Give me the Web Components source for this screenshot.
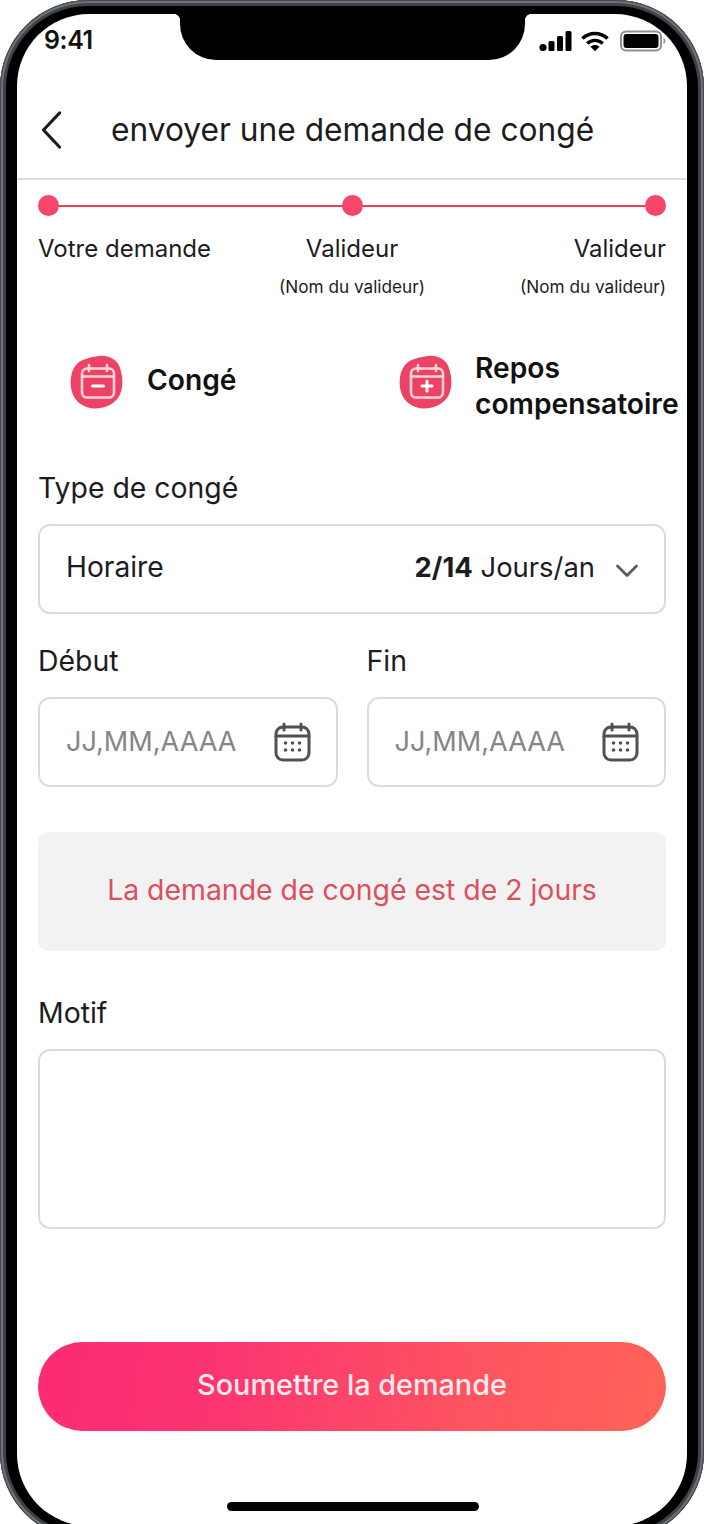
<!DOCTYPE html>
<html lang="fr">
<head>
<meta charset="utf-8">
<title>Demande de congé</title>
<style>
  html, body { margin: 0; height: 1524px; overflow: hidden; background: #fff; }
  body { font-family: Inter, "Open Sans", sans-serif; color: #1c1c1e; }
</style>
</head>
<body>
<phone-frame>
  <status-bar></status-bar>
  <app-header>envoyer une demande de congé</app-header>
  <step-tracker></step-tracker>
  <leave-options></leave-options>
  <form-field style="margin-top:52px">Type de congé
    <select-box slot="control" value="Horaire"><b>2/14</b> Jours/an</select-box>
  </form-field>
  <date-row></date-row>
  <notice-box>La demande de congé est de 2 jours</notice-box>
  <form-field style="margin-top:44px">Motif
    <text-box slot="control"></text-box>
  </form-field>
  <submit-button>Soumettre la demande</submit-button>
  <home-bar></home-bar>
</phone-frame>

<script>
  // small helper, every component is the same shape: a shadow root and some markup
  function component(name, html, setup) {
    customElements.define(name, class extends HTMLElement {
      constructor() {
        super();
        this.attachShadow({ mode: 'open' });
      }
      connectedCallback() {
        this.shadowRoot.innerHTML = html;
        if (setup) setup(this);
      }
    });
  }

  component('phone-frame', `
    <style>
      :host { display: block; width: 704px; height: 1540px; box-sizing: border-box;
        padding: 14px 17px; border-radius: 88px; background: #000;
        box-shadow: inset 0 0 0 1px #45484d, inset 0 0 0 3px #6f7379, inset 0 0 0 6px #3f4247; }
      .screen { height: 1512px; background: #fff; border-radius: 72px; overflow: hidden;
        display: flex; flex-direction: column; }
    </style>
    <div class="screen"><slot></slot></div>`);

  component('status-bar', `
    <style>
      :host { display: flex; height: 46px; flex: none; }
      .time { width: 163px; box-sizing: border-box; padding: 13px 0 0 27px;
        font: 600 25px/26px Inter, sans-serif; letter-spacing: -.4px; color: #111; }
      .notch { position: relative; width: 345px; background: #000; border-radius: 0 0 36px 36px; }
      .notch::before, .notch::after { content: ""; position: absolute; top: 0; width: 7px; height: 7px; }
      .notch::before { left: -7px; background: radial-gradient(circle at 0 100%, transparent 7px, #000 7.5px); }
      .notch::after { right: -7px; background: radial-gradient(circle at 100% 100%, transparent 7px, #000 7.5px); }
      .icons { flex: 1; display: flex; align-items: center; gap: 9px; padding: 12px 0 0 14px; height: 30px; }
      .icons svg + svg + svg { margin-left: 2px; }
    </style>
    <div class="time">9:41</div>
    <div class="notch"></div>
    <div class="icons">
      <svg width="33" height="22" viewBox="0 0 33 22" fill="#000">
        <circle cx="4" cy="17.500" r="3.600"/>
        <rect x="9.500" y="11" width="6" height="10" rx="1.500"/>
        <rect x="18" y="6" width="6" height="15" rx="1.500"/>
        <rect x="26.500" y="1" width="6" height="20" rx="1.500"/>
      </svg>
      <svg width="28" height="22" viewBox="0 0 29 22" fill="none" stroke="#000" stroke-width="3.600">
        <path d="M1.500 8.500C8.800 1.500 20.200 1.500 27.500 8.500"/>
        <path d="M6.500 13.500C11 9.300 18 9.300 22.500 13.500"/>
        <path d="M14.500 21.500L9.800 16.900C12.400 14.600 16.600 14.600 19.200 16.900Z" fill="#000" stroke="none"/>
      </svg>
      <svg width="46" height="22" viewBox="0 0 46 22">
        <rect x="1" y="1.500" width="40" height="19" rx="5" fill="none" stroke="#8f8f8f" stroke-width="2"/>
        <rect x="3.500" y="4" width="35" height="14" rx="3" fill="#000"/>
        <path d="M43.500 8v6c1.300-.5 2-1.700 2-3s-.7-2.500-2-3z" fill="#9a9a9a"/>
      </svg>
    </div>`);

  component('app-header', `
    <style>
      :host { display: flex; align-items: center; flex: none; height: 120px; box-sizing: border-box;
        padding: 21px 0 0 24px; border-bottom: 2px solid #dddddd; }
      svg { flex: none; margin-top: 1px; }
      .title { margin-left: 49px; font-size: 31.700px; color: #1c1c1e; white-space: nowrap; }
    </style>
    <svg width="21" height="38" viewBox="0 0 21 38" fill="none" stroke="#1c1c1e" stroke-width="3.200" stroke-linecap="round" stroke-linejoin="round">
      <path d="M18.500 2 2.500 19l16 17"/>
    </svg>
    <div class="title"><slot></slot></div>`);

  component('step-tracker', `
    <style>
      :host { display: block; flex: none; padding: 15px 21px 0; color: #1c1c1e; }
      .track { position: relative; display: flex; justify-content: space-between; align-items: center; height: 21px; }
      .track::before { content: ""; position: absolute; left: 10px; right: 10px; top: 9.500px; height: 2px; background: #ec3f5e; }
      i { position: relative; display: block; width: 21px; height: 21px; border-radius: 50%; background: #f4476a; }
      .labels { display: grid; grid-template-columns: 1fr 1fr 1fr; margin-top: 17px; }
      .step { font-size: 24px; line-height: 32px; white-space: nowrap; }
      .step small { display: block; margin-top: 10px; font-size: 17.200px; line-height: 24px; }
      .mid { text-align: center; }
      .end { text-align: right; }
    </style>
    <div class="track"><i></i><i></i><i></i></div>
    <div class="labels">
      <div class="step">Votre demande</div>
      <div class="step mid">Valideur<small>(Nom du valideur)</small></div>
      <div class="step end">Valideur<small>(Nom du valideur)</small></div>
    </div>`);

  const calendarGlyph = mark => `
    <svg width="54" height="56" viewBox="0 0 54 56">
      <path d="M29 2C38 1 47 5 50 14c3 9 4 21-2 30-6 8-18 12-28 10C10 52 3 45 1 34 0 25 1 15 8 9c5-4 13-6 21-7z" fill="#ee4264"/>
      <g fill="none" stroke="#fbd3db" stroke-width="2.600" stroke-linecap="round" stroke-linejoin="round">
        <rect x="12" y="14.500" width="32" height="29" rx="5"/>
        <path d="M12 22.500h32M19 11v6M37 11v6"/>
      </g>
      <g fill="none" stroke="#fff" stroke-width="3" stroke-linecap="round">${mark}</g>
    </svg>`;

  component('leave-options', `
    <style>
      :host { display: flex; flex: none; margin-top: 47px; font-size: 28.200px; font-weight: 600; color: #111; }
      .opt { display: flex; align-items: center; height: 72px; }
      .opt svg { flex: none; }
      .a { width: 382px; padding-left: 53px; box-sizing: border-box; }
      .opt span { margin-left: 22px; line-height: 36px; white-space: nowrap; }
      .a span { margin-left: 23px; padding-bottom: 4px; }
      .b span { padding-top: 8px; }
    </style>
    <div class="opt a">${calendarGlyph('<path d="M22.500 32h11"/>')}<span>Congé</span></div>
    <div class="opt b">${calendarGlyph('<path d="M28 27v10M23 32h10"/>')}<span>Repos<br>compensatoire</span></div>`);

  component('form-field', `
    <style>
      :host { display: block; flex: none; padding: 0 21px; }
      .label { font-size: 28.400px; line-height: 36px; margin-bottom: 18px; color: #1c1c1e; }
    </style>
    <div class="label"><slot></slot></div>
    <slot name="control"></slot>`);

  component('select-box', `
    <style>
      :host { display: flex; align-items: center; height: 90px; box-sizing: border-box; padding: 0 26px 0 26px;
        border: 2px solid #dcdcdc; border-radius: 12px; font-size: 27.400px; color: #1c1c1e; }
      .value { flex: 1; font-size: 28.200px; padding-bottom: 4px; }
      .meta { white-space: nowrap; padding-bottom: 4px; }
      svg { margin-left: 20px; margin-right: -1px; margin-top: 3px; }
      ::slotted(b) { font-weight: 700; }
    </style>
    <span class="value"></span>
    <span class="meta"><slot></slot></span>
    <svg width="24" height="16" viewBox="0 0 24 16" fill="none" stroke="#5c5c5c" stroke-width="2.800" stroke-linecap="round" stroke-linejoin="round">
      <path d="M2.500 3 12 12.500 21.500 3"/>
    </svg>`, el => {
      el.shadowRoot.querySelector('.value').textContent = el.getAttribute('value');
    });

  component('date-input', `
    <style>
      :host { display: flex; align-items: center; justify-content: space-between; height: 90px; box-sizing: border-box;
        padding: 0 25px 0 26px; border: 2px solid #dcdcdc; border-radius: 12px; font-size: 27.100px; color: #858585; }
      span { padding-bottom: 2px; }
    </style>
    <span>JJ,MM,AAAA</span>
    <svg width="37" height="40" viewBox="0 0 37 40" fill="none" stroke="#4f5154" stroke-width="3" stroke-linecap="round">
      <rect x="2" y="5" width="33" height="33" rx="7"/>
      <path d="M2 14h33M10 2v6M27 2v6"/>
      <g fill="#4f5154" stroke="none">
        <circle cx="11.500" cy="21" r="1.800"/><circle cx="18.500" cy="21" r="1.800"/><circle cx="25.500" cy="21" r="1.800"/>
        <circle cx="11.500" cy="28" r="1.800"/><circle cx="18.500" cy="28" r="1.800"/><circle cx="25.500" cy="28" r="1.800"/>
      </g>
    </svg>`);

  component('date-row', `
    <style>
      :host { display: grid; grid-template-columns: 1fr 1fr; gap: 29px; flex: none; padding: 29px 21px 0; }
      .label { font-size: 28.400px; line-height: 36px; margin-bottom: 18px; color: #1c1c1e; }
    </style>
    <div><div class="label">Début</div><date-input></date-input></div>
    <div><div class="label">Fin</div><date-input></date-input></div>`);

  component('notice-box', `
    <style>
      :host { display: flex; align-items: center; justify-content: center; flex: none; height: 119px; box-sizing: border-box;
        margin: 45px 21px 0; padding-bottom: 5px; border-radius: 10px; background: #f2f2f2; color: #d9505f; font-size: 28.400px; }
    </style>
    <slot></slot>`);

  component('text-box', `
    <style>
      :host { display: block; height: 180px; box-sizing: border-box; border: 2px solid #dcdcdc; border-radius: 12px; }
    </style>`);

  component('submit-button', `
    <style>
      :host { display: flex; align-items: center; justify-content: center; flex: none; height: 89px; box-sizing: border-box;
        margin: 113px 21px 0; padding-bottom: 4px; border-radius: 45px; color: #fbe9ee; font-size: 28.800px; font-weight: 500;
        background: linear-gradient(100deg, #fb2b73 0%, #fb3570 30%, #fd5560 70%, #ff6357 100%); }
    </style>
    <slot></slot>`);

  component('home-bar', `
    <style>
      :host { display: block; flex: none; width: 252px; height: 9px; margin: 71px 0 0 210px;
        border-radius: 5px; background: #000; }
    </style>`);
</script>
</body>
</html>
